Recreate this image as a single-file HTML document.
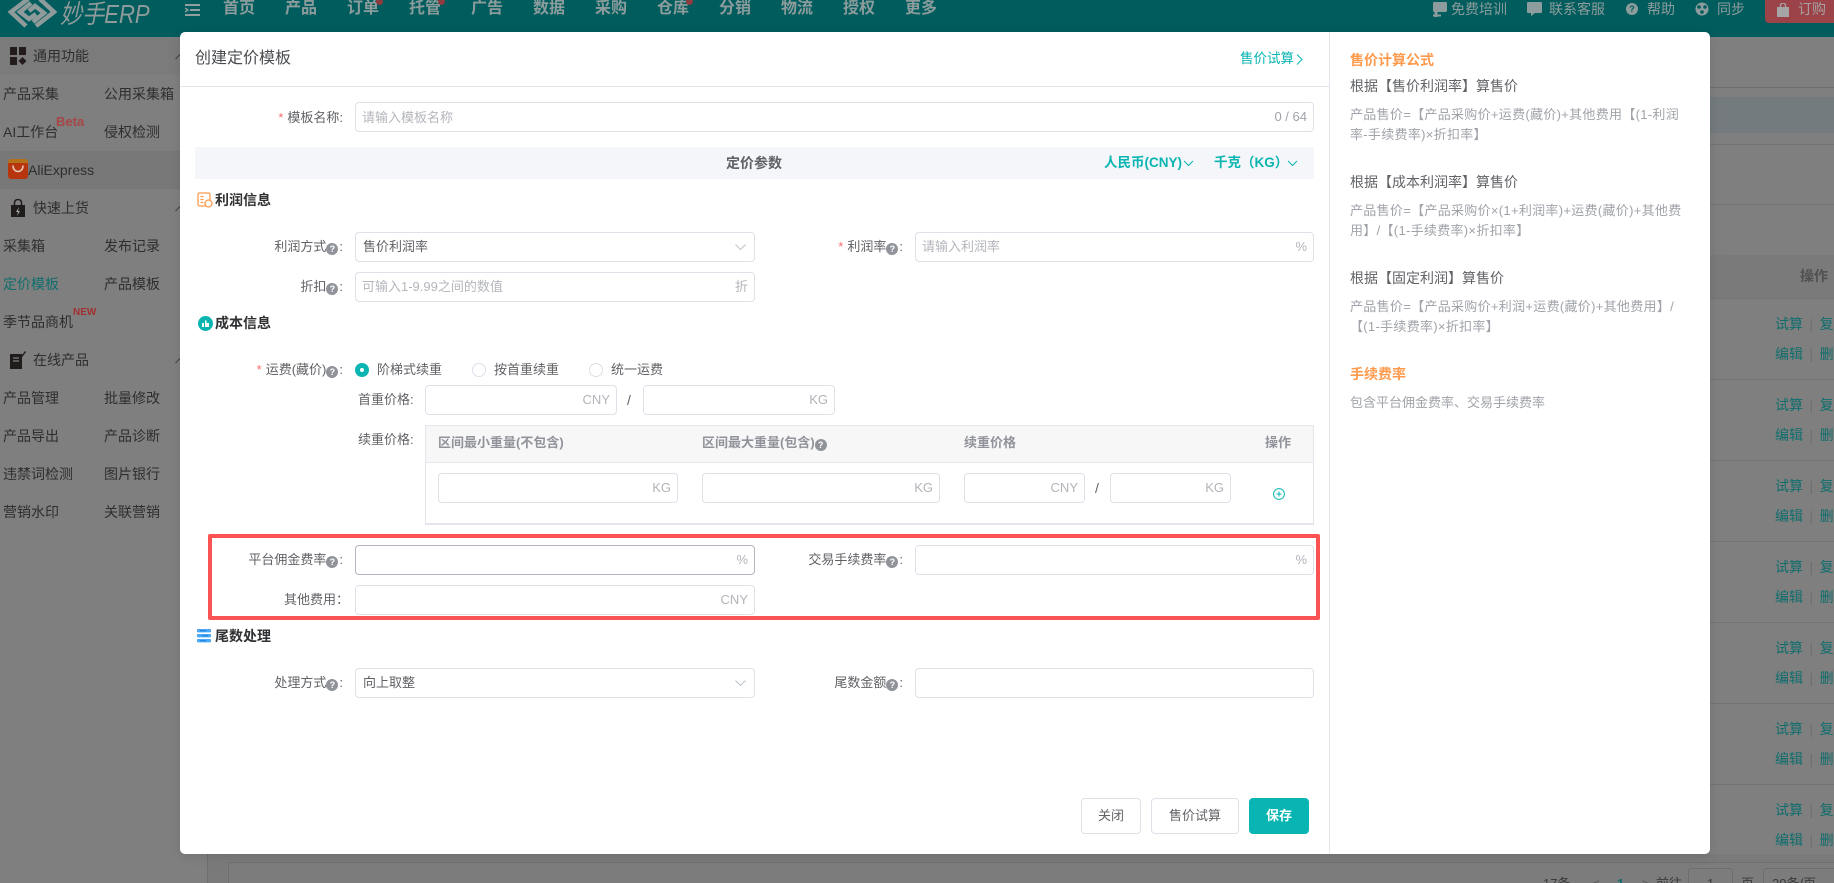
<!DOCTYPE html>
<html lang="zh-CN"><head><meta charset="utf-8"><title>创建定价模板</title>
<style>
html,body{margin:0;padding:0;width:1834px;height:883px;overflow:hidden;background:#7f7f7f}
body{position:relative;font-family:"Liberation Sans","Noto Sans CJK SC",sans-serif;font-size:13px;color:#606266}
.a,.t,.l,.i,.s,svg{position:absolute}
.t,.l{white-space:nowrap;line-height:20px}
.l{left:0;text-align:right;color:#606266}
.l b{color:#f56c6c;font-weight:400;margin-right:4px}
.q{display:inline-block;width:12px;height:12px;border-radius:50%;background:#909399;color:#fff;font-size:9px;line-height:12px;text-align:center;font-style:normal;font-weight:700;vertical-align:-1px;margin-left:0;margin-right:1px}
.i{box-sizing:border-box;height:30px;background:#fff;border:1px solid #dfe1e9;border-radius:4px}
.i span{position:absolute;right:6px;top:4px;line-height:20px;color:#b2b4ba;white-space:nowrap}
.i em{position:absolute;left:6px;top:4px;line-height:20px;color:#b4b6bc;font-style:normal;white-space:nowrap}
.i u{position:absolute;left:7px;top:4px;line-height:20px;color:#606266;text-decoration:none;white-space:nowrap}
.n{color:#8c9c9c;font-size:16px;top:-1px;font-weight:700}
.d{position:absolute;width:7px;height:7px;border-radius:50%;background:#8e3a3e;top:-2px}
.m{color:#8d9c9c;font-size:14px;top:-1px}
.sb{color:#2e2e2e;font-size:14px}
.sec{color:#303133;font-size:14px;font-weight:700}
.h{color:#909399;font-weight:700}
.tl{color:#0f6e6d;font-size:14px}
.g{color:#a0a3a9;line-height:20px;font-size:13px;left:1350px}
.ls{letter-spacing:.3px}
.f{color:#606266;font-size:14px;left:1350px}
.o{color:#ff9a4d;font-size:14px;font-weight:700;left:1350px}
.tc{color:#0ab5b1}
.hl{position:absolute;height:1px;left:1710px;width:124px;background:#747474}
.btn{position:absolute;box-sizing:border-box;height:36px;top:798px;border:1px solid #dfe1e9;border-radius:4px;background:#fff;text-align:center;line-height:34px;color:#606266}
.ch{fill:none;stroke:#c0c4cc;stroke-width:1.1}
.sp{color:#6f6f6f;margin:0 6.5px}
</style></head><body>

<!-- background page -->
<div class="a" style="left:0;top:0;width:1834px;height:37px;background:#005c5d"></div>
<div class="a" style="left:0;top:37px;width:207px;height:846px;background:#7f7f7f;border-right:1px solid #6f6f6f"></div>
<div class="a" style="left:0;top:37px;width:180px;height:38px;background:#7b7b7b"></div>
<div class="a" style="left:0;top:151px;width:180px;height:38px;background:#787878"></div>

<svg style="left:6px;top:-4px" width="52" height="34" viewBox="0 0 52 34" fill="none" stroke="#8f9a9a" stroke-width="4.5"><path d="M22 3L5 16l15 14"/><path d="M25 7L14 16l9 7 7-5"/><path d="M30 30l18-14L34 3"/><path d="M27 26l11-9-9-7-6 5"/></svg>
<span class="t" style="left:60px;top:-1px;font-size:26px;line-height:30px;font-style:italic;color:#8f9a9a;transform:scaleX(.85);transform-origin:0 0">妙手ERP</span>
<svg style="left:185px;top:3px" width="16" height="14" fill="none" stroke="#8f9e9e" stroke-width="2"><path d="M0 2h15M5 7h10M0 12h15"/><path d="M0 5l3 2-3 2" stroke-width="1.4"/></svg>

<span class="t n" style="left:223px">首页</span><span class="t n" style="left:285px">产品</span><span class="t n" style="left:347px">订单</span><span class="t n" style="left:409px">托管</span><span class="t n" style="left:471px">广告</span><span class="t n" style="left:533px">数据</span><span class="t n" style="left:595px">采购</span><span class="t n" style="left:657px">仓库</span><span class="t n" style="left:719px">分销</span><span class="t n" style="left:781px">物流</span><span class="t n" style="left:843px">授权</span><span class="t n" style="left:905px">更多</span>
<i class="d" style="left:376px"></i><i class="d" style="left:438px"></i><i class="d" style="left:686px"></i>

<svg style="left:1433px;top:2px" width="14" height="15"><rect x="0" y="0" width="14" height="10" rx="1.5" fill="#8d9c9c"/><rect x="1.5" y="8" width="3" height="7" fill="#8d9c9c"/><rect x="0" y="12.5" width="8" height="2" fill="#8d9c9c"/></svg>
<span class="t m" style="left:1451px">免费培训</span>
<svg style="left:1527px;top:2px" width="15" height="15"><path d="M1 0h13a1 1 0 0 1 1 1v9a1 1 0 0 1-1 1H8l-4 3v-3H1a1 1 0 0 1-1-1V1a1 1 0 0 1 1-1z" fill="#8d9c9c"/></svg>
<span class="t m" style="left:1549px">联系客服</span>
<div class="a" style="left:1626px;top:3px;width:12px;height:12px;border-radius:50%;background:#8d9c9c;color:#005c5d;font-size:9px;line-height:12px;text-align:center;font-weight:700">?</div>
<span class="t m" style="left:1647px">帮助</span>
<svg style="left:1695px;top:2px" width="14" height="14"><circle cx="7" cy="7" r="6.5" fill="#8d9c9c"/><circle cx="4" cy="5" r="1.8" fill="#005c5d"/><circle cx="10" cy="5" r="1.8" fill="#005c5d"/><circle cx="7" cy="10" r="1.8" fill="#005c5d"/></svg>
<span class="t m" style="left:1717px">同步</span>
<div class="a" style="left:1765px;top:-4px;width:69px;height:27px;background:#9b4349;border-radius:0 0 0 4px"></div>
<svg style="left:1777px;top:3px" width="12" height="14"><path d="M0 4h12v10H0z" fill="#a5a5a5"/><path d="M3.5 5V2.5a2.5 2.5 0 0 1 5 0V5" fill="none" stroke="#a5a5a5" stroke-width="1.4"/></svg>
<span class="t m" style="left:1798px;color:#a8a0a0">订购</span>

<!-- sidebar -->
<svg style="left:10px;top:47px" width="17" height="18" fill="#241c1c"><rect width="7" height="8" x="0" y="0"/><rect width="7" height="8" x="9" y="0"/><rect width="7" height="8" x="0" y="10"/><path d="M12.5 10l4 4-4 4-4-4z"/></svg>
<span class="t sb" style="left:33px;top:46px">通用功能</span>
<svg style="left:175px;top:54px" width="9" height="6" fill="none" stroke="#444"><path d="M.5 5L4.5 1l4 4"/></svg>
<span class="t sb" style="left:3px;top:84px">产品采集</span><span class="t sb" style="left:104px;top:84px">公用采集箱</span>
<span class="t sb" style="left:3px;top:122px">AI工作台</span><span class="t sb" style="left:104px;top:122px">侵权检测</span>
<span class="t" style="left:56px;top:112px;color:#a84545;font-weight:700;font-size:13px">Beta</span>
<div class="a" style="left:8px;top:159px;width:20px;height:20px;border-radius:3px;background:linear-gradient(#b5711a 0 20%,#b8360e 20%)"></div>
<svg style="left:8px;top:159px" width="20" height="20" fill="none" stroke="#e8c8b8" stroke-width="1.6"><path d="M5 6.5c0 8 10 8 10 0"/></svg>
<span class="t sb" style="left:28px;top:160px">AliExpress</span>
<svg style="left:11px;top:199px" width="14" height="18"><path d="M0 6h14v12H0z" fill="#201c1c"/><path d="M3.5 7V3.5a3.5 3 0 0 1 7 0V7" fill="none" stroke="#201c1c" stroke-width="1.5"/><path d="M8 8l-3 5h2l-1 4 3-5H7z" fill="#aaa"/></svg>
<span class="t sb" style="left:33px;top:198px">快速上货</span>
<svg style="left:175px;top:206px" width="9" height="6" fill="none" stroke="#444"><path d="M.5 5L4.5 1l4 4"/></svg>
<span class="t sb" style="left:3px;top:236px">采集箱</span><span class="t sb" style="left:104px;top:236px">发布记录</span>
<span class="t sb" style="left:3px;top:274px;color:#0f6e6d">定价模板</span><span class="t sb" style="left:104px;top:274px">产品模板</span>
<span class="t sb" style="left:3px;top:312px">季节品商机</span>
<span class="t" style="left:73px;top:303px;color:#a33030;font-weight:700;font-size:10px">NEW</span>
<svg style="left:10px;top:351px" width="16" height="18"><path d="M0 3h12v15H0z" fill="#201c1c"/><path d="M3 7h6M3 10h6" stroke="#999"/><path d="M9 8l6-8 1 1-6 8z" fill="#201c1c"/></svg>
<span class="t sb" style="left:33px;top:350px">在线产品</span>
<svg style="left:175px;top:358px" width="9" height="6" fill="none" stroke="#444"><path d="M.5 5L4.5 1l4 4"/></svg>
<span class="t sb" style="left:3px;top:388px">产品管理</span><span class="t sb" style="left:104px;top:388px">批量修改</span>
<span class="t sb" style="left:3px;top:426px">产品导出</span><span class="t sb" style="left:104px;top:426px">产品诊断</span>
<span class="t sb" style="left:3px;top:464px">违禁词检测</span><span class="t sb" style="left:104px;top:464px">图片银行</span>
<span class="t sb" style="left:3px;top:502px">营销水印</span><span class="t sb" style="left:104px;top:502px">关联营销</span>

<!-- right bg -->
<div class="hl" style="top:87px;background:#6f6f6f"></div>
<div class="a" style="left:1710px;top:97px;width:124px;height:36px;background:#747b7e"></div>
<div class="hl" style="top:144px"></div><div class="hl" style="top:204px"></div>
<div class="a" style="left:1710px;top:255px;width:124px;height:43px;background:#7a7a7a"></div>
<div class="hl" style="top:298px"></div>
<span class="t" style="left:1800px;top:266px;font-size:14px;font-weight:700;color:#505050">操作</span>
<div class="hl" style="top:379px"></div><div class="hl" style="top:460px"></div><div class="hl" style="top:541px"></div><div class="hl" style="top:622px"></div><div class="hl" style="top:703px"></div><div class="hl" style="top:784px"></div>
<div class="a tl" style="left:1775px;top:314px;width:60px;height:540px;overflow:visible;white-space:nowrap;line-height:20px">
<div class="a" style="left:0;top:0">试算<span class="sp">|</span>复制</div>
<div class="a" style="left:0;top:30px">编辑<span class="sp">|</span>删除</div>
<div class="a" style="left:0;top:81px">试算<span class="sp">|</span>复制</div>
<div class="a" style="left:0;top:111px">编辑<span class="sp">|</span>删除</div>
<div class="a" style="left:0;top:162px">试算<span class="sp">|</span>复制</div>
<div class="a" style="left:0;top:192px">编辑<span class="sp">|</span>删除</div>
<div class="a" style="left:0;top:243px">试算<span class="sp">|</span>复制</div>
<div class="a" style="left:0;top:273px">编辑<span class="sp">|</span>删除</div>
<div class="a" style="left:0;top:324px">试算<span class="sp">|</span>复制</div>
<div class="a" style="left:0;top:354px">编辑<span class="sp">|</span>删除</div>
<div class="a" style="left:0;top:405px">试算<span class="sp">|</span>复制</div>
<div class="a" style="left:0;top:435px">编辑<span class="sp">|</span>删除</div>
<div class="a" style="left:0;top:486px">试算<span class="sp">|</span>复制</div>
<div class="a" style="left:0;top:516px">编辑<span class="sp">|</span>删除</div>
</div>
<div class="a" style="left:208px;top:854px;width:1626px;height:29px;background:#7a7a7a"></div>
<div class="a" style="left:228px;top:862px;width:1606px;height:21px;background:#7c7c7c;border-top:1px solid #6f6f6f;border-left:1px solid #6f6f6f"></div>
<span class="t" style="left:1543px;top:874px;color:#3a3a3a">17条</span>
<span class="t" style="left:1592px;top:874px;color:#555">&lt;</span>
<span class="t" style="left:1617px;top:874px;color:#0f6e6d;font-weight:700">1</span>
<span class="t" style="left:1642px;top:874px;color:#555">&gt;</span>
<span class="t" style="left:1656px;top:874px;color:#3a3a3a">前往</span>
<div class="a" style="left:1688px;top:868px;width:43px;height:20px;border:1px solid #6d6d6d;border-radius:3px"></div>
<span class="t" style="left:1707px;top:874px;color:#3a3a3a">1</span>
<span class="t" style="left:1741px;top:874px;color:#3a3a3a">页</span>
<div class="a" style="left:1763px;top:868px;width:80px;height:20px;border:1px solid #6d6d6d;border-radius:3px"></div>
<span class="t" style="left:1772px;top:874px;color:#3a3a3a">20条/页</span>

<!-- dialog -->
<div class="a" style="left:180px;top:32px;width:1530px;height:822px;background:#fff;border-radius:5px;box-shadow:0 2px 12px rgba(0,0,0,.1)"></div>
<div class="a" style="left:180px;top:86px;width:1149px;height:1px;background:#e4e6ee"></div>
<div class="a" style="left:1329px;top:32px;width:1px;height:822px;background:#e4e6ee"></div>
<span class="t" style="left:195px;top:49px;font-size:16px;color:#4a4c50">创建定价模板</span>
<span class="t tc" style="left:1240px;top:49px;font-size:13.5px">售价试算</span>
<svg style="left:1296px;top:54px" width="7" height="11" fill="none" stroke="#0ab5b1"><path d="M1 .5L6 5.5 1 10.5"/></svg>

<span class="l" style="top:108px;width:343px"><b>*</b>模板名称:</span>
<div class="i" style="left:355px;top:102px;width:959px"><em style="top:5px">请输入模板名称</em><span style="color:#a0a3a9">0 / 64</span></div>

<div class="a" style="left:195px;top:147px;width:1119px;height:32px;background:#f4f6fa"></div>
<span class="t" style="left:726px;top:153px;font-size:14px;font-weight:700;color:#606266">定价参数</span>
<span class="t tc" style="left:1104px;top:153px;font-size:13.5px;font-weight:700">人民币(CNY)</span>
<svg style="left:1183px;top:160px" width="11" height="7" fill="none" stroke="#0ab5b1"><path d="M1 1l4.5 4.5L10 1"/></svg>
<span class="t tc" style="left:1214px;top:153px;font-size:13.5px;font-weight:700">千克（KG）</span>
<svg style="left:1287px;top:160px" width="11" height="7" fill="none" stroke="#0ab5b1"><path d="M1 1l4.5 4.5L10 1"/></svg>

<svg style="left:197px;top:192px" width="16" height="16" fill="none" stroke="#ff9a4d" stroke-width="1.3"><rect x="1" y="1" width="12" height="13" rx="1.5"/><path d="M3.5 4.5h3M3.5 7.5h3M3.5 10.5h3"/><circle cx="11.5" cy="11.5" r="3.5" fill="#fff"/></svg>
<span class="t sec" style="left:215px;top:190px">利润信息</span>

<span class="l" style="top:237px;width:343px">利润方式<i class="q">?</i>:</span>
<div class="i" style="left:355px;top:232px;width:400px"><u>售价利润率</u><svg style="left:379px;top:11px" width="11" height="7"><path class="ch" d="M.5.5l5 5 5-5"/></svg></div>
<span class="l" style="top:237px;width:903px"><b>*</b>利润率<i class="q">?</i>:</span>
<div class="i" style="left:915px;top:232px;width:399px"><em>请输入利润率</em><span>%</span></div>
<span class="l" style="top:277px;width:343px">折扣<i class="q">?</i>:</span>
<div class="i" style="left:355px;top:272px;width:400px"><em>可输入1-9.99之间的数值</em><span>折</span></div>

<svg style="left:198px;top:316px" width="15" height="15"><circle cx="7.5" cy="7.5" r="7.5" fill="#0ab5b1"/><path d="M4 7h2v4H4zM7 4.5h1.5V7H11v4H7z" fill="#fff"/></svg>
<span class="t sec" style="left:215px;top:313px">成本信息</span>

<span class="l" style="top:360px;width:343px"><b>*</b>运费(藏价)<i class="q">?</i>:</span>
<div class="a" style="left:355px;top:363px;width:14px;height:14px;border-radius:50%;background:#0ab5b1"></div>
<div class="a" style="left:360px;top:368px;width:4px;height:4px;border-radius:50%;background:#fff"></div>
<span class="t" style="left:377px;top:360px">阶梯式续重</span>
<div class="a" style="left:472px;top:363px;width:12px;height:12px;border-radius:50%;border:1px solid #dcdfe6"></div>
<span class="t" style="left:494px;top:360px">按首重续重</span>
<div class="a" style="left:589px;top:363px;width:12px;height:12px;border-radius:50%;border:1px solid #dcdfe6"></div>
<span class="t" style="left:611px;top:360px">统一运费</span>

<span class="t" style="left:358px;top:390px">首重价格:</span>
<div class="i" style="left:425px;top:385px;width:192px"><span>CNY</span></div>
<span class="t" style="left:627px;top:390px;font-size:14px">/</span>
<div class="i" style="left:643px;top:385px;width:192px"><span>KG</span></div>

<span class="t" style="left:358px;top:430px">续重价格:</span>
<div class="a" style="left:425px;top:425px;width:889px;height:100px;box-sizing:border-box;border:1px solid #e4e6ee;border-bottom-width:2px;background:#fff"></div>
<div class="a" style="left:426px;top:426px;width:887px;height:36px;background:#f7f7f8;border-bottom:1px solid #e8e9ee"></div>
<span class="t h" style="left:438px;top:433px">区间最小重量(不包含)</span>
<span class="t h" style="left:702px;top:433px">区间最大重量(包含)<i class="q" style="background:#909399">?</i></span>
<span class="t h" style="left:964px;top:433px">续重价格</span>
<span class="t h" style="left:1265px;top:433px">操作</span>
<div class="i" style="left:438px;top:473px;width:240px"><span>KG</span></div>
<div class="i" style="left:702px;top:473px;width:238px"><span>KG</span></div>
<div class="i" style="left:964px;top:473px;width:121px"><span>CNY</span></div>
<span class="t" style="left:1095px;top:478px;font-size:14px">/</span>
<div class="i" style="left:1110px;top:473px;width:121px"><span>KG</span></div>
<svg style="left:1273px;top:488px" width="12" height="12" fill="none" stroke="#0ab5b1"><circle cx="6" cy="6" r="5.4"/><path d="M3.5 6h5M6 3.5v5"/></svg>

<div class="a" style="left:208px;top:534px;width:1112px;height:86px;box-sizing:border-box;border:4px solid #fb5353;border-radius:2px"></div>
<span class="l" style="top:550px;width:343px">平台佣金费率<i class="q">?</i>:</span>
<div class="i" style="left:355px;top:545px;width:400px;border-color:#b2b5bd"><span>%</span></div>
<span class="l" style="top:550px;width:903px">交易手续费率<i class="q">?</i>:</span>
<div class="i" style="left:915px;top:545px;width:399px"><span>%</span></div>
<span class="l" style="top:590px;width:349px">其他费用：</span>
<div class="i" style="left:355px;top:585px;width:400px"><span>CNY</span></div>

<svg style="left:197px;top:629px" width="15" height="14"><rect x="0" y="0" width="14" height="3.4" rx="1" fill="#4aa8f5"/><rect x="0" y="5" width="14" height="3.4" rx="1" fill="#4aa8f5"/><rect x="0" y="10" width="14" height="3.4" rx="1" fill="#4aa8f5"/><path d="M3 1.7h6M5 6.7h6M3 11.7h6" stroke="#1a7ee0"/></svg>
<span class="t sec" style="left:215px;top:626px">尾数处理</span>

<span class="l" style="top:673px;width:343px">处理方式<i class="q">?</i>:</span>
<div class="i" style="left:355px;top:668px;width:400px"><u>向上取整</u><svg style="left:379px;top:11px" width="11" height="7"><path class="ch" d="M.5.5l5 5 5-5"/></svg></div>
<span class="l" style="top:673px;width:903px">尾数金额<i class="q">?</i>:</span>
<div class="i" style="left:915px;top:668px;width:399px"></div>

<div class="btn" style="left:1081px;width:60px">关闭</div>
<div class="btn" style="left:1151px;width:88px">售价试算</div>
<div class="btn" style="left:1249px;width:60px;background:#08b5b2;border-color:#08b5b2;color:#fff;font-weight:700">保存</div>

<!-- help panel -->
<span class="t o" style="top:50px">售价计算公式</span>
<span class="t f" style="top:76px">根据【售价利润率】算售价</span>
<span class="t g ls" style="top:105px">产品售价=【产品采购价+运费(藏价)+其他费用【(1-利润<br>率-手续费率)×折扣率】</span>
<span class="t f" style="top:172px">根据【成本利润率】算售价</span>
<span class="t g ls" style="top:201px">产品售价=【产品采购价×(1+利润率)+运费(藏价)+其他费<br>用】/【(1-手续费率)×折扣率】</span>
<span class="t f" style="top:268px">根据【固定利润】算售价</span>
<span class="t g ls" style="top:297px">产品售价=【产品采购价+利润+运费(藏价)+其他费用】/<br>【(1-手续费率)×折扣率】</span>
<span class="t o" style="top:364px">手续费率</span>
<span class="t g" style="top:393px">包含平台佣金费率、交易手续费率</span>
</body></html>
